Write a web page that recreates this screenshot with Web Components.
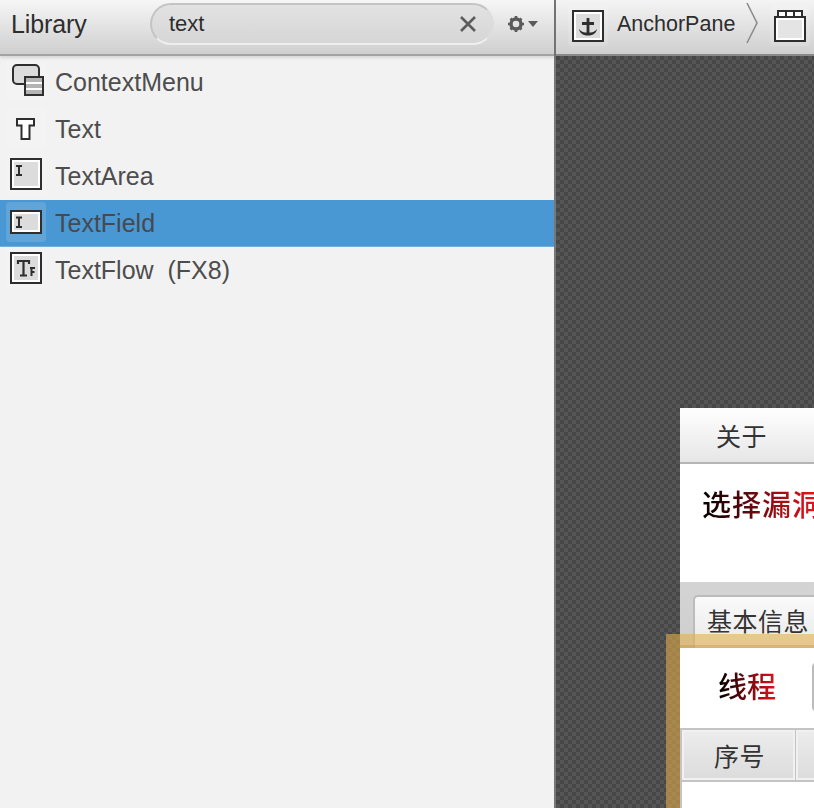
<!DOCTYPE html>
<html>
<head>
<meta charset="utf-8">
<style>
  html, body { margin: 0; height: 100%; overflow: hidden; }
  body { font-family: "Liberation Sans", Arial, "Noto Sans CJK SC", sans-serif; }
</style>
</head>
<body>
<scene-shell>
  <library-panel slot="left">
    <library-item icon="menu">ContextMenu</library-item>
    <library-item icon="text">Text</library-item>
    <library-item icon="area">TextArea</library-item>
    <library-item icon="field" selected>TextField</library-item>
    <library-item icon="flow">TextFlow&nbsp; (FX8)</library-item>
  </library-panel>
  <design-pane slot="right"></design-pane>
</scene-shell>

<script>
// icon strokes are all 2px #2e2e2e on a #dcdcdc fill, like the scene builder glyphs
const ICONS = {
  menu: `<svg width="34" height="34" viewBox="0 0 34 34" style="overflow:visible">
    <rect x="4" y="1" width="26" height="19" rx="4" fill="#dcdcdc" stroke="#2e2e2e" stroke-width="2"/>
    <rect x="16" y="13" width="18" height="18" fill="#fff" stroke="#2e2e2e" stroke-width="2"/>
    <path d="M17 14h16v4H17zM17 20h16v4H17zM17 26h16v4H17z" fill="#b4b4b4"/>
  </svg>`,
  text: `<svg width="34" height="34" viewBox="0 0 34 34">
    <path d="M8 8H25V14.500H20.500V28H12.500V14.500H8Z" fill="#fff" stroke="#2e2e2e" stroke-width="2"/>
  </svg>`,
  area: `<svg width="34" height="34" viewBox="0 0 34 34">
    <rect x="2" y="1" width="30" height="30" fill="#fff" stroke="#2e2e2e" stroke-width="2"/>
    <rect x="5" y="4" width="24" height="24" fill="#dcdcdc"/>
    <path d="M7 8h6M7 17h6M10 8v9" fill="none" stroke="#2e2e2e" stroke-width="2"/>
  </svg>`,
  field: `<svg width="34" height="34" viewBox="0 0 34 34">
    <rect x="2" y="6" width="30" height="22" fill="#fff" stroke="#2e2e2e" stroke-width="2"/>
    <rect x="5" y="9" width="24" height="16" fill="#dcdcdc"/>
    <path d="M7 12.500h6M7 22h6M10 12.500v9.500" fill="none" stroke="#2e2e2e" stroke-width="2"/>
  </svg>`,
  flow: `<svg width="34" height="34" viewBox="0 0 34 34">
    <rect x="2" y="1" width="30" height="30" fill="#fff" stroke="#2e2e2e" stroke-width="2"/>
    <rect x="5" y="4" width="24" height="24" fill="#dcdcdc"/>
    <path d="M9 12V9h11v3M14.500 9v14M11 23.500h7" fill="none" stroke="#2e2e2e" stroke-width="2.200"/>
    <path d="M21 16h5M22.500 16v8M22.500 20h3" fill="none" stroke="#2e2e2e" stroke-width="2"/>
  </svg>`,
  anchor: `<svg width="34" height="34" viewBox="0 0 34 34">
    <rect x="2" y="2" width="30" height="30" fill="#fff" stroke="#2e2e2e" stroke-width="2"/>
    <rect x="5" y="5" width="24" height="24" fill="#dcdcdc"/>
    <path d="M17 9v16M11 14.500h12" fill="none" stroke="#2e2e2e" stroke-width="2.800"/>
    <path d="M8 20c2 3 5 3.500 9 3.500s7-.5 9-3.500c-1 5-5 6.500-9 6.500s-8-1.500-9-6.500z" fill="#2e2e2e"/>
  </svg>`,
  pane: `<svg width="34" height="34" viewBox="0 0 34 34">
    <path d="M5 8V2h24v6" fill="#fff" stroke="#2e2e2e" stroke-width="2"/>
    <path d="M13 2v6M21 2v6" stroke="#2e2e2e" stroke-width="2"/>
    <rect x="2" y="8" width="30" height="24" fill="#fff" stroke="#2e2e2e" stroke-width="2"/>
    <rect x="5" y="11" width="24" height="18" fill="#e4e4e4"/>
  </svg>`
};

class SceneShell extends HTMLElement {
  constructor() {
    super();
    this.attachShadow({ mode: "open" }).innerHTML = `
      <style>
        :host { display: grid; grid-template-columns: 554px 1fr; width: 814px; height: 808px; background: #777; column-gap: 2px; }
        ::slotted(*) { min-width: 0; }
      </style>
      <slot name="left"></slot>
      <slot name="right"></slot>`;
  }
}

class LibraryPanel extends HTMLElement {
  constructor() {
    super();
    this.attachShadow({ mode: "open" }).innerHTML = `
      <style>
        :host { display: flex; flex-direction: column; background: #f2f2f2; height: 808px; }
        header {
          height: 56px; box-sizing: border-box; flex: none;
          border-bottom: 2px solid #a3a3a3;
          background: linear-gradient(#f6f6f6, #cfcfcf);
          box-shadow: 0 2px 3px rgba(0,0,0,.12);
          display: flex; align-items: center; padding: 0 16px 6px 11px;
        }
        h1 { margin: 0; width: 75px; flex: none; font: 400 25px/1 "Liberation Sans", Arial, sans-serif; color: #2d2d2d; letter-spacing: -.1px; }
        .search {
          margin-left: 64px; width: 344px; height: 42px; box-sizing: border-box; flex: none;
          border-radius: 21px; border: 2px solid #c4c4c4; border-bottom-color: #eee; border-right-color: #ddd;
          background: linear-gradient(#e2e2e2, #d6d6d6);
          display: flex; align-items: center; justify-content: space-between;
          padding: 0 16px 0 17px; font-size: 22px; color: #2d2d2d;
        }
        .gear { margin-left: 13px; display: flex; }
        .list { display: flex; flex-direction: column; padding-top: 3px; }
      </style>
      <header>
        <h1>Library</h1>
        <div class="search">
          <span>text</span>
          <svg width="16" height="16" viewBox="0 0 16 16"><path d="M1 1l14 14M15 1L1 15" stroke="#5c5c5c" stroke-width="2.600"/></svg>
        </div>
        <div class="gear">
          <svg width="32" height="18" viewBox="0 0 32 18">
            <circle cx="9" cy="9" r="5" fill="none" stroke="#5a5a5a" stroke-width="3.400"/>
            <path d="M9 1v3M9 14v3M1 9h3M14 9h3M3.500 3.500l2 2M12.500 12.500l2 2M14.500 3.500l-2 2M5.500 12.500l-2 2" stroke="#5a5a5a" stroke-width="2.600"/>
            <path d="M21 6h10l-5 6z" fill="#5a5a5a"/>
          </svg>
        </div>
      </header>
      <div class="list"><slot></slot></div>`;
  }
}

class LibraryItem extends HTMLElement {
  constructor() {
    super();
    this.attachShadow({ mode: "open" });
  }
  connectedCallback() {
    const icon = ICONS[this.getAttribute("icon")] || "";
    this.shadowRoot.innerHTML = `
      <style>
        :host { display: flex; align-items: center; height: 47px; box-sizing: border-box; padding: 0 0 1px 6px; font-size: 25px; color: #4d4d4d; }
        :host([selected]) { background: #4a98d3; border-bottom: 1px solid #6fb0e0; padding-bottom: 0; color: #454a50; }
        .ico { width: 40px; height: 40px; border-radius: 4px; background: rgba(255,255,255,.13); display: flex; align-items: center; justify-content: center; margin: 2px 9px 0 0; flex: none; align-self: flex-start; }
      </style>
      <span class="ico">${icon}</span>
      <span><slot></slot></span>`;
  }
}

class DesignPane extends HTMLElement {
  constructor() {
    super();
    this.attachShadow({ mode: "open" }).innerHTML = `
      <style>
        :host { display: flex; flex-direction: column; height: 808px; position: relative; overflow: hidden; }
        header {
          height: 56px; flex: none; box-sizing: border-box;
          border-bottom: 2px solid #8a8a8a;
          background: linear-gradient(#f4f4f4, #cfcfcf);
          display: flex; align-items: center; padding: 0 0 6px 12px;
          font-size: 21.500px; color: #2d2d2d;
        }
        .crumb { display: flex; width: 40px; height: 40px; border-radius: 4px; background: rgba(255,255,255,.13); align-items: center; justify-content: center; flex: none; margin-top: 4px; }
        .name { margin-left: 9px; }
        .sep { margin: -2px 12px 0 11px; flex: none; display: flex; }
        .canvas {
          flex: 1; position: relative;
          background-color: #4a4a4a;
          background-image: conic-gradient(#555 25%, #474747 0 50%, #555 0 75%, #474747 0);
          background-size: 8px 8px;
        }
      </style>
      <header>
        <span class="crumb">${ICONS.anchor}</span>
        <span class="name">AnchorPane</span>
        <span class="sep"><svg width="12" height="42" viewBox="0 0 12 42"><path d="M1 1l10 20L1 41" fill="none" stroke="#8c8c8c" stroke-width="1.600"/></svg></span>
        <span class="crumb">${ICONS.pane}</span>
      </header>
      <div class="canvas"><fx-stage></fx-stage></div>`;
  }
}

// the designed window sits on the free canvas, its spot is the content here
class FxStage extends HTMLElement {
  constructor() {
    super();
    this.attachShadow({ mode: "open" }).innerHTML = `
      <style>
        :host { position: absolute; left: 124px; top: 352px; width: 300px; height: 400px; display: flex; flex-direction: column; background: #fff; font-family: "Liberation Sans", "Noto Sans CJK SC", sans-serif; }
        .menu { height: 56px; box-sizing: border-box; flex: none; border-bottom: 2px solid #b5b5b5; background: linear-gradient(#fff, #e6e6e6); padding: 0 0 0 36px; display: flex; align-items: center; font-size: 25px; color: #333; letter-spacing: .5px; }
        .title { height: 118px; flex: none; box-sizing: border-box; padding: 25px 0 0 22px; }
        .grad { line-height: 34px; display: inline-block; color: transparent; -webkit-background-clip: text; background-clip: text; }
        .title .grad { font-size: 29px; letter-spacing: 1px; white-space: nowrap; font-weight: 500; background-image: linear-gradient(90deg, #000 0, #e0141c 110px); }
        .tabs { height: 66px; flex: none; box-sizing: border-box; background: linear-gradient(#d4d4d4, #cecece); padding: 13px 0 0 13px; overflow: hidden; }
        .tab { display: inline-block; height: 53px; box-sizing: border-box; border: 2px solid #bcbcbc; border-bottom: 0; border-radius: 5px 5px 0 0; background: linear-gradient(#fafafa, #e8e8e8); padding: 9px 10px 0 12px; font-size: 25px; line-height: 32px; color: #333; letter-spacing: .5px; white-space: nowrap; }
        .inner { flex: 1; position: relative; background: #fff; }
        .lbl { height: 80px; display: flex; align-items: center; padding-left: 38px; box-sizing: border-box; position: relative; }
        .lbl .grad { font-weight: 500; font-size: 29px; background-image: linear-gradient(90deg, #000, #e0141c); }
        .btn { position: absolute; left: 132px; top: 14px; width: 60px; height: 50px; border: 2px solid #bcbcbc; border-radius: 5px; background: #ececec; box-sizing: border-box; }
        .head { height: 54px; box-sizing: border-box; display: flex; border-top: 2px solid #c4c4c4; border-bottom: 2px solid #c4c4c4; padding-left: 2px; background: #c4c4c4; gap: 1px; }
        .cell { width: 113px; box-sizing: border-box; border: 2px solid #f1f1f1; background: linear-gradient(#ececec, #dcdcdc); display: flex; align-items: center; justify-content: center; padding-left: 2px; font-size: 25px; color: #333; letter-spacing: .5px; flex: none; }
        .cell + .cell { width: 100px; }
        .rows { position: absolute; left: 0; top: 134px; bottom: 0; width: 2px; background: #c4c4c4; }
        .guide-top { position: absolute; left: 0; right: 0; top: 226px; height: 14px; box-sizing: border-box; border-bottom: 3px solid rgba(180,130,50,.25); background: rgba(230,174,74,.58); }
        .guide-left { position: absolute; left: -14px; width: 14px; top: 226px; bottom: 0; background: rgba(230,174,74,.58); }
      </style>
      <div class="menu">关于</div>
      <div class="title"><span class="grad">选择漏洞</span></div>
      <div class="tabs"><span class="tab">基本信息</span></div>
      <div class="inner">
        <div class="lbl"><span class="grad">线程</span><span class="btn"></span></div>
        <div class="head"><span class="cell">序号</span><span class="cell"></span></div>
        <div class="rows"></div>
      </div>
      <div class="guide-top"></div>
      <div class="guide-left"></div>`;
  }
}

customElements.define("scene-shell", SceneShell);
customElements.define("library-panel", LibraryPanel);
customElements.define("library-item", LibraryItem);
customElements.define("design-pane", DesignPane);
customElements.define("fx-stage", FxStage);
</script>
</body>
</html>
